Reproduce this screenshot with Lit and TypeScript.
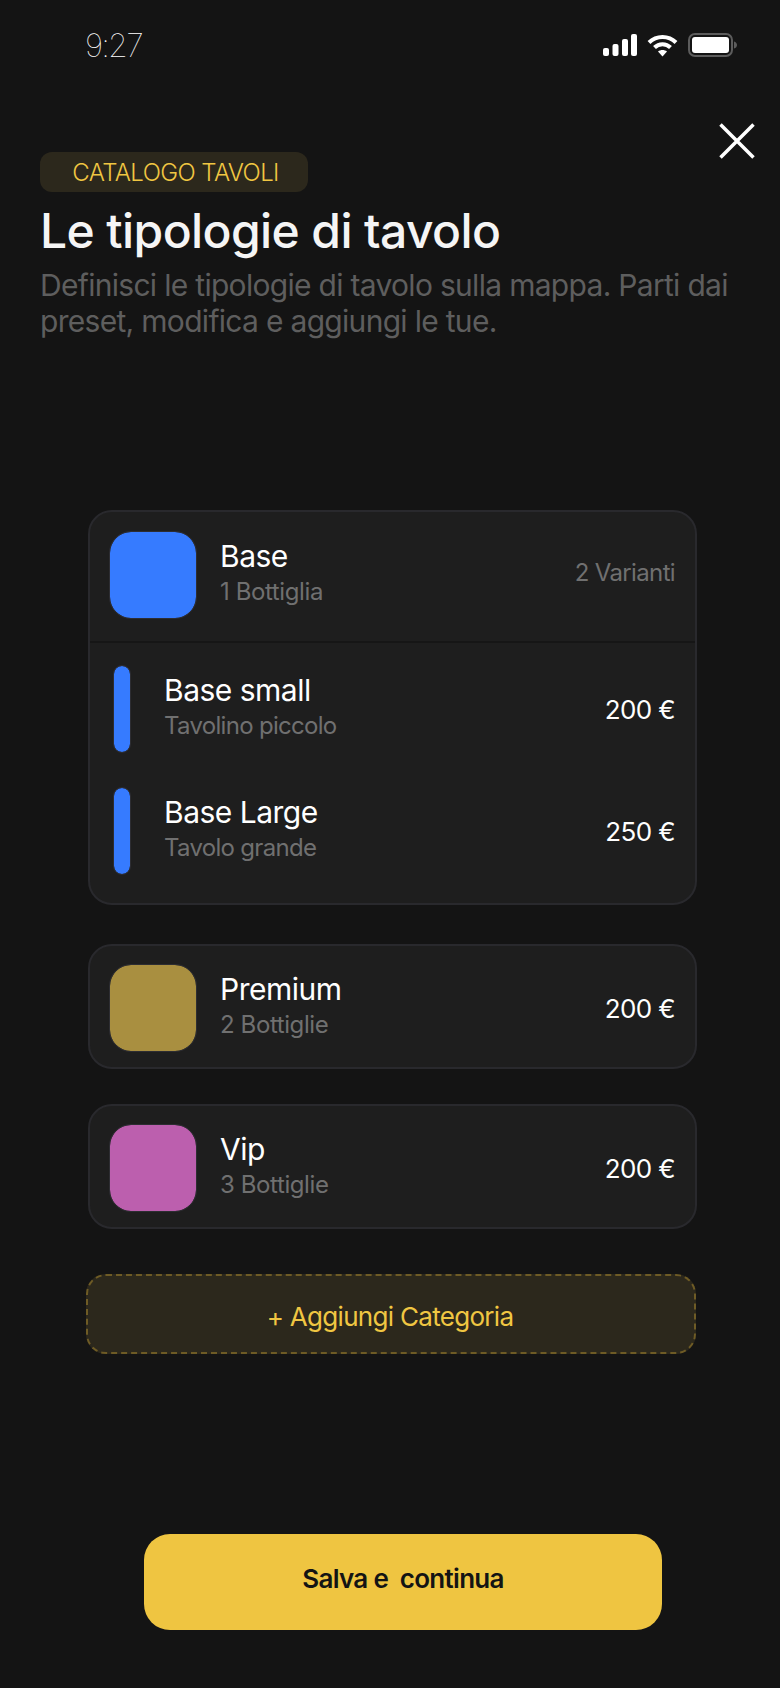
import { LitElement, html, css } from 'lit';
import { customElement } from 'lit/decorators.js';

const BLUE = '#367bff';

@customElement('app-root')
export class AppRoot extends LitElement {
  static override styles = css`
    :host {
      display: block;
      width: 780px;
      height: 1688px;
      background: #141414;
      font-family: Inter, 'Noto Sans', sans-serif;
      color: #fff;
      overflow: hidden;
    }
    .page {
      position: relative;
      display: flex;
      flex-direction: column;
      height: 1688px;
      box-sizing: border-box;
    }
    .status {
      display: flex;
      justify-content: space-between;
      align-items: center;
      height: 46px;
      margin-top: 22px;
      padding: 0 43px 0 85px;
    }
    .time {
      font-size: 32px;
      font-weight: 100;
      letter-spacing: -1.8px;
      color: #fff;
    }
    .status-icons {
      display: flex;
      align-items: center;
      gap: 10px;
    }
    .close {
      position: absolute;
      top: 123px;
      right: 25px;
    }
    .head {
      margin-top: 84px;
      padding: 0 40px;
    }
    .chip {
      display: flex;
      align-items: center;
      justify-content: center;
      box-sizing: border-box;
      width: 268px;
      height: 40px;
      padding-left: 3px;
      border-radius: 12px;
      background: #2c281c;
      color: #f0c642;
      font-size: 24px;
      font-weight: 300;
      letter-spacing: -0.6px;
    }
    h1 {
      margin: 9px 0 0;
      font-size: 48px;
      line-height: 60px;
      font-weight: 500;
      letter-spacing: -0.6px;
      color: #f5f5f5;
    }
    .sub {
      margin: 6px 0 0;
      font-size: 30px;
      line-height: 36px;
      font-weight: 400;
      letter-spacing: -0.7px;
      color: #5e5e5e;
    }
    .list {
      display: flex;
      flex-direction: column;
      margin: 171px 83px 0 88px;
    }
    .card {
      background: #1e1e1e;
      border: 2px solid #29292d;
      border-radius: 24px;
      box-sizing: border-box;
      margin-bottom: 35px;
    }
    .card.open {
      margin-bottom: 39px;
    }
    .card.last {
      margin-bottom: 45px;
    }
    .card-row {
      display: flex;
      align-items: center;
      box-sizing: border-box;
      height: 121px;
      padding: 3px 20px 0 19px;
    }
    .card-row.top {
      height: 131px;
      padding: 0 20px 3px 19px;
      border-bottom: 2px solid #161616;
    }
    .swatch {
      flex: none;
      width: 86px;
      height: 86px;
      border: 1px solid #2d2d32;
      border-radius: 22px;
      background-clip: padding-box;
      margin-right: 23px;
    }
    .info {
      flex: 1;
      display: flex;
      flex-direction: column;
      gap: 3px;
      margin-bottom: 5px;
    }
    .name {
      font-size: 30px;
      line-height: 36px;
      font-weight: 400;
      letter-spacing: -0.5px;
      color: #fff;
    }
    .desc {
      font-size: 24px;
      line-height: 30px;
      font-weight: 400;
      letter-spacing: -0.7px;
      color: #707070;
    }
    .card-row .desc {
      letter-spacing: -0.4px;
    }
    .price {
      font-size: 26px;
      font-weight: 400;
      letter-spacing: -0.6px;
      color: #fff;
    }
    .count {
      font-size: 24px;
      letter-spacing: -0.65px;
      margin-bottom: 6px;
      color: #707070;
    }
    .variants {
      display: flex;
      flex-direction: column;
      gap: 34px;
      padding: 22px 20px 28px 23px;
    }
    .variant {
      display: flex;
      align-items: center;
      height: 88px;
    }
    .bar {
      flex: none;
      width: 16px;
      height: 86px;
      border: 1px solid #2d2d32;
      border-radius: 9px;
      background-clip: padding-box;
      margin-right: 33px;
    }
    .add {
      display: flex;
      align-items: center;
      justify-content: center;
      box-sizing: border-box;
      width: 610px;
      height: 80px;
      padding: 4px 2px 0 0;
      margin-left: -2px;
      border: 2px dashed #6e5b25;
      border-radius: 20px;
      background: #2c281c;
      color: #f0c642;
      font-size: 26px;
      letter-spacing: -0.7px;
    }
    .save {
      position: absolute;
      left: 144px;
      top: 1534px;
      display: flex;
      align-items: center;
      justify-content: center;
      box-sizing: border-box;
      width: 518px;
      height: 96px;
      padding-bottom: 8px;
      border-radius: 26px;
      background: #efc541;
      color: #141414;
      font-size: 26px;
      font-weight: 600;
      letter-spacing: -0.7px;
      white-space: pre;
    }
  `;

  private variants = [
    { name: 'Base small', desc: 'Tavolino piccolo', price: '200 €' },
    { name: 'Base Large', desc: 'Tavolo grande', price: '250 €' },
  ];

  private cats = [
    { name: 'Premium', desc: '2 Bottiglie', price: '200 €', color: '#a98f40', cls: 'card' },
    { name: 'Vip', desc: '3 Bottiglie', price: '200 €', color: '#bc5fae', cls: 'card last' },
  ];

  override render() {
    return html`
      <div class="page">
        <div class="status">
          <span class="time">9:27</span>
          <div class="status-icons">
            <svg width="34" height="22" viewBox="0 0 34 22" fill="#fff">
              <rect x="0" y="14" width="6" height="8" rx="2" />
              <rect x="9.5" y="10" width="6" height="12" rx="2" />
              <rect x="19" y="5" width="6" height="17" rx="2" />
              <rect x="28" y="0" width="6" height="22" rx="2" />
            </svg>
            <svg width="31" height="23" viewBox="0 0 31 23" fill="none" stroke="#fff" stroke-width="4">
              <path d="M2 8.5C9.5 1 21.5 1 29 8.5" />
              <path d="M7.5 13.5C12 9 19 9 23.5 13.5" />
              <path d="M11 17.5 15.500 22.500 20 17.500C17.500 15.500 13.500 15.500 11 17.500Z" fill="#fff" stroke="none" />
            </svg>
            <svg width="49" height="24" viewBox="0 0 49 24">
              <rect x="1" y="1" width="43" height="22" rx="6" fill="none" stroke="#5c5c5c" stroke-width="2" />
              <rect x="4" y="4" width="37" height="16" rx="3" fill="#fff" />
              <path d="M46 8.500C48 9 49 10.500 49 12S48 15 46 15.500Z" fill="#5c5c5c" />
            </svg>
          </div>
        </div>

        <svg class="close" width="36" height="36" viewBox="0 0 36 36" stroke="#fff" stroke-width="3.500">
          <path d="M1.500 1.500 34.500 34.500M34.500 1.500 1.500 34.500" />
        </svg>

        <div class="head">
          <div class="chip">CATALOGO TAVOLI</div>
          <h1>Le tipologie di tavolo</h1>
          <p class="sub">Definisci le tipologie di tavolo sulla mappa. Parti dai preset, modifica e aggiungi le tue.</p>
        </div>

        <div class="list">
          <div class="card open">
            <div class="card-row top">
              <div class="swatch" style="background-color:${BLUE}"></div>
              <div class="info">
                <span class="name">Base</span>
                <span class="desc">1 Bottiglia</span>
              </div>
              <span class="count">2 Varianti</span>
            </div>
            <div class="variants">
              ${this.variants.map(
                (v) => html`
                  <div class="variant">
                    <div class="bar" style="background-color:${BLUE}"></div>
                    <div class="info">
                      <span class="name">${v.name}</span>
                      <span class="desc">${v.desc}</span>
                    </div>
                    <span class="price">${v.price}</span>
                  </div>
                `
              )}
            </div>
          </div>

          ${this.cats.map(
            (c) => html`
              <div class=${c.cls}>
                <div class="card-row">
                  <div class="swatch" style="background-color:${c.color}"></div>
                  <div class="info">
                    <span class="name">${c.name}</span>
                    <span class="desc">${c.desc}</span>
                  </div>
                  <span class="price">${c.price}</span>
                </div>
              </div>
            `
          )}

          <div class="add">+ Aggiungi Categoria</div>
        </div>

        <div class="save">Salva e  continua</div>
      </div>
    `;
  }
}
